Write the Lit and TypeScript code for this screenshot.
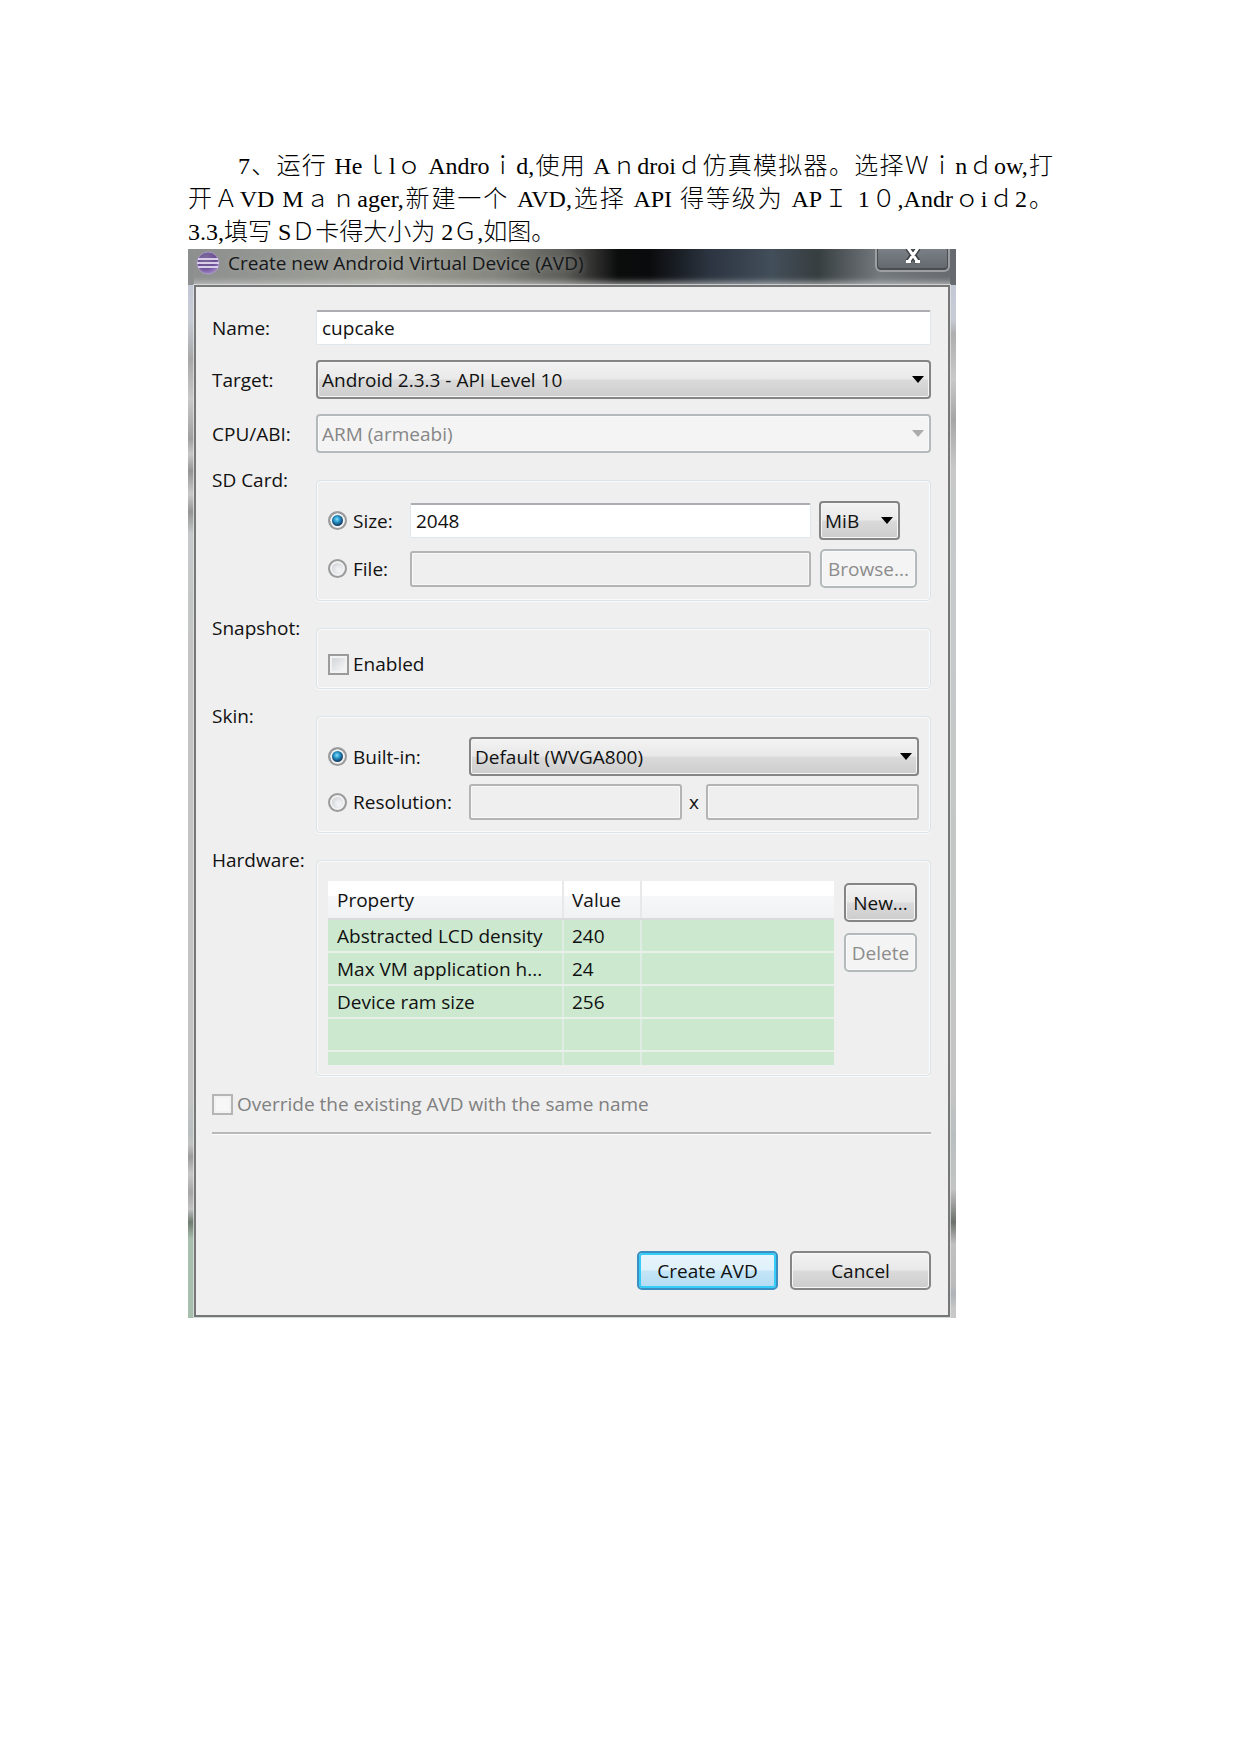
import { LitElement, html, css, svg, nothing } from "lit";
import { customElement, property } from "lit/decorators.js";

interface HardwareRow {
  name: string;
  value: string;
}

const HARDWARE: HardwareRow[] = [
  { name: "Abstracted LCD density", value: "240" },
  { name: "Max VM application h...", value: "24" },
  { name: "Device ram size", value: "256" },
  { name: "", value: "" },
  { name: "", value: "" },
];

/** Drop-down with the glossy face of the desktop theme. */
@customElement("combo-box")
export class ComboBox extends LitElement {
  @property() value = "";
  @property() label = "";
  @property({ type: Boolean }) disabled = false;

  static styles = css`
    :host {
      display: grid;
      min-width: 0;
    }
    .face,
    .arrow {
      grid-area: 1 / 1;
    }
    .face {
      appearance: none;
      box-sizing: border-box;
      width: 100%;
      height: 39px;
      margin: 0;
      padding: 0 24px 0 4px;
      border: 2px solid #858585;
      border-radius: 4px;
      background: linear-gradient(#f2f2f2, #e9e9e9 48%, #dadada 52%, #cdcdcd);
      box-shadow: inset 0 0 0 1px #f6f6f6;
      color: #111;
      font: inherit;
    }
    .face:disabled {
      border-color: #b4babc;
      background: #f4f4f4;
      box-shadow: inset 0 0 0 1px #fafafa;
      color: #868686;
      opacity: 1;
    }
    .arrow {
      align-self: center;
      justify-self: end;
      width: 12px;
      height: 7px;
      margin-right: 7px;
      fill: #000;
      pointer-events: none;
    }
    .face:disabled + .arrow {
      fill: #ababab;
    }
  `;

  render() {
    return html`
      <select class="face" aria-label=${this.label} ?disabled=${this.disabled}>
        <option>${this.value}</option>
      </select>
      <svg class="arrow" viewBox="0 0 12 7" aria-hidden="true"><path d="M0 0H12L6 7Z" /></svg>
    `;
  }
}

@customElement("app-root")
export class AppRoot extends LitElement {
  static styles = css`
    :host {
      display: block;
      background: #fff;
    }
    * {
      box-sizing: border-box;
    }
    .page {
      padding: 150px 188px 0;
      min-height: 100vh;
    }
    .intro {
      margin: 0;
      color: #000;
      font: 300 24px/33px "Liberation Serif", "Noto Sans CJK SC", serif;
    }
    .line {
      display: block;
      white-space: nowrap;
    }
    .full {
      text-align: justify;
      text-align-last: justify;
    }
    .first {
      padding-left: 50px;
    }

    .dialog {
      max-width: 768px;
      padding: 0 6px 1px;
      color: #111;
      font: 19px/24px "Open Sans", "Noto Sans", sans-serif;
      background:
        linear-gradient(90deg, #8d8f8f, #a1a399 26%, #85867f 40%, #5c5c58 49%, #0b0c0c 56%, #0a0b0c 60%, #2c3541 68%, #424e59 76%, #373e40 82%, #74797e 90%, #666a6e 100%)
          top / 100% 36px no-repeat,
        linear-gradient(#c3c8d6 36px, #c8ccd6 70px, #aeaeae 85px, #c9c9c9 130px, #a6a6a6 170px, #c8c8c8 220px, #c6caca 300px, #c4c4c4 850px, #b9bfbf 885px, #c4c4c4 940px, #6d706d 973px, #c0c0c0 995px, #bcbcbc 1035px, #b0b2b8 1045px, #c8c8c8 1060px)
          right top / 6px 100% no-repeat,
        linear-gradient(#c3c8d6 36px, #c8ccd6 70px, #a8a8a8 110px, #c9c9c9 150px, #a0a0a0 190px, #c8c8c8 205px, #959595 222px, #c9c9c9 245px, #959595 263px, #c6caca 285px, #c4c4c4 400px, #c4c4c4 850px, #b9bfbf 885px, #c4c4c4 895px, #9c9c9c 908px, #c7c7c7 925px, #a6a6a6 943px, #c2c2c2 960px, #6f7b70 973px, #a9bfae 990px);
    }
    .titlebar {
      display: flex;
      align-items: flex-start;
      justify-content: space-between;
      height: 36px;
      box-shadow: inset 0 -8px 6px -5px rgba(205, 205, 205, 0.75);
    }
    .caption {
      display: flex;
      align-items: center;
      gap: 8px;
      height: 28px;
      padding-left: 2px;
    }
    .orb {
      width: 24px;
      height: 24px;
    }
    .title {
      margin: 0;
      font: inherit;
      color: #15171a;
      text-shadow: 0 0 6px rgba(190, 190, 185, 0.5);
    }
    .close {
      display: flex;
      justify-content: center;
      width: 75px;
      height: 23px;
      padding: 0;
      border: 2px solid #9da0a3;
      border-top: 0;
      border-radius: 0 0 6px 6px;
      background: linear-gradient(#7b8086, #62676c);
      box-shadow: inset 0 -1px 0 1px #4a4e52;
    }
    .close svg {
      width: 18px;
      height: 16px;
    }

    .client {
      padding: 23px 17px 25px 16px;
      border: 2px solid #777;
      background: #efefef;
      box-shadow: 0 0 0 1px rgba(225, 230, 230, 0.7);
    }
    .form {
      display: grid;
      grid-template-columns: 104px minmax(0, 1fr);
      gap: 15px 0;
      align-items: center;
    }
    .group-label {
      align-self: start;
    }
    .group {
      margin-top: 12px;
      padding: 20px 13px 12px 11px;
      border: 1px solid #d9e3e8;
      border-radius: 4px;
      box-shadow: inset 0 0 0 1px #fafafa, 0 1px 0 #fafafa;
    }

    .text {
      width: 100%;
      min-width: 0;
      height: 35px;
      margin: 0;
      padding: 0 5px;
      border: 1px solid #e0e6ee;
      border-top: 2px solid #abadb3;
      border-radius: 2px;
      background: #fff;
      color: #111;
      font: inherit;
    }
    .text:disabled {
      height: 36px;
      border: 2px solid #b4b4b4;
      border-radius: 3px;
      background: #efefef;
      box-shadow: inset 0 0 0 1px #f8f8f8;
    }
    .button {
      height: 39px;
      margin: 0;
      padding: 0;
      border: 2px solid #858585;
      border-radius: 5px;
      background: linear-gradient(#f2f2f2, #e9e9e9 48%, #dadada 52%, #cdcdcd);
      box-shadow: inset 0 0 0 1px #f6f6f6;
      color: #111;
      font: inherit;
    }
    .button:disabled {
      border-color: #b4babc;
      background: #f4f4f4;
      box-shadow: inset 0 0 0 1px #fafafa;
      color: #8c8c8c;
    }
    .default {
      border-color: #3b8fc0;
      background: linear-gradient(#e8f5fc, #dff1fb 48%, #c3e5f8 52%, #b3dcf2);
      box-shadow: inset 0 0 0 2px #35cdf8;
    }

    .choice {
      display: flex;
      align-items: center;
      gap: 6px;
      white-space: nowrap;
    }
    .radio,
    .check {
      appearance: none;
      flex: none;
      margin: 0;
      border: 2px solid #9b9b9b;
    }
    .radio {
      width: 19px;
      height: 19px;
      border-radius: 50%;
      background: radial-gradient(circle at 60% 60%, #f0f1f3 15%, #c9ccd2 75%);
      box-shadow: inset 0 0 0 2px #f2f2f2;
    }
    .radio:checked {
      background: radial-gradient(circle at 46% 42%, #8fdcf8 0, #2c9fd2 22%, #164f7c 46%, #1b3f5c 58%, #e2e4e6 66%);
    }
    .check {
      width: 21px;
      height: 21px;
      background: linear-gradient(135deg, #cbcfd5, #f4f4f4 80%);
      box-shadow: inset 0 0 0 2px #f2f2f2;
    }
    .check:disabled {
      border-color: #b5b5b5;
      background: #f7f7f7;
    }
    .snug {
      gap: 4px;
    }

    .card {
      display: grid;
      grid-template-columns: 82px minmax(0, 1fr) 106px;
      row-gap: 9px;
      align-items: center;
    }
    .unit {
      width: 81px;
      margin-left: 8px;
    }
    .browse {
      margin-left: 9px;
    }
    .snapshot {
      padding-top: 23px;
    }
    .skin {
      display: grid;
      grid-template-columns: 141px minmax(0, 1fr);
      row-gap: 8px;
      align-items: center;
      padding-right: 11px;
    }
    .size {
      display: grid;
      grid-template-columns: minmax(0, 1fr) 24px minmax(0, 1fr);
      align-items: center;
      text-align: center;
    }
    .hardware {
      display: flex;
      align-items: flex-start;
      gap: 10px;
      padding-bottom: 10px;
    }
    .table {
      flex: 1;
      min-width: 0;
      border-collapse: collapse;
      table-layout: fixed;
      background: #cce8cf;
      text-align: left;
    }
    .table th,
    .table td {
      height: 33px;
      padding: 0 0 0 9px;
      border-right: 2px solid #dfece3;
      border-bottom: 2px solid #e9efe9;
      font-weight: 400;
      white-space: nowrap;
    }
    .table th:nth-child(2),
    .table td:nth-child(2) {
      padding-left: 8px;
    }
    .table th:last-child,
    .table td:last-child {
      border-right: 0;
    }
    .table tr:last-child td {
      height: 14px;
      border-bottom: 0;
    }
    .table thead tr th {
      height: 38px;
      border-right-color: #e6e8ea;
      border-bottom: 2px solid #d9dbdd;
      background: linear-gradient(#fff 40%, #f6f7f9 41%, #f1f2f4);
    }
    .property {
      width: 235px;
    }
    .value {
      width: 78px;
    }
    .side {
      display: flex;
      flex-direction: column;
      gap: 11px;
      width: 73px;
      padding-top: 2px;
    }

    .override {
      width: fit-content;
      margin-top: 16px;
      color: #808080;
    }
    .rule {
      height: 3px;
      margin: 16px 0 0;
      border: 0;
      border-top: 2px solid #b8b8b8;
      background: #fbfbfb;
    }
    .actions {
      display: flex;
      justify-content: flex-end;
      gap: 12px;
      margin-top: 116px;
    }
    .actions .button {
      width: 141px;
    }
  `;

  private renderOrb() {
    return html`<svg class="orb" viewBox="0 0 24 24" aria-hidden="true">
      <defs>
        <radialGradient id="orb" cx="0.4" cy="0.25" r="0.8">
          <stop offset="0" stop-color="#7d6a9c" />
          <stop offset="0.6" stop-color="#6a4f94" />
          <stop offset="1" stop-color="#a98bd0" />
        </radialGradient>
      </defs>
      <circle cx="12" cy="12" r="11" fill="url(#orb)" stroke="#a99bc0" stroke-width="1" />
      ${[8, 12, 16].map(
        (y) => svg`<rect x=${y === 12 ? 1 : 2} y=${y - 1} width=${y === 12 ? 22 : 20} height="2" fill="#d9cdea" />`,
      )}
    </svg>`;
  }

  private renderRow(row: HardwareRow) {
    return html`<tr>
      <td>${row.name || nothing}</td>
      <td>${row.value || nothing}</td>
      <td></td>
    </tr>`;
  }

  render() {
    return html`
      <main class="page">
        <p class="intro">
          <span class="line full first">7、运行 Heｌlｏ Androｉd,使用 Aｎdroiｄ仿真模拟器。选择Ｗｉnｄow,打</span>
          <span class="line full">开ＡVD Mａｎager,新建一个 AVD,选择 API 得等级为 APＩ 1０,Andrｏiｄ2。</span>
          <span class="line">3.3,填写 SＤ卡得大小为 2Ｇ,如图。</span>
        </p>

        <section class="dialog" role="dialog" aria-labelledby="title">
          <header class="titlebar">
            <div class="caption">
              ${this.renderOrb()}
              <h1 class="title" id="title">Create new Android Virtual Device (AVD)</h1>
            </div>
            <button class="close" aria-label="Close">
              <svg viewBox="0 0 18 16" aria-hidden="true">
                <path d="M4 -1L14 13M14 -1L4 13" fill="none" stroke="#3f4448" stroke-width="6" />
                <path d="M4 -1L13 12M14 -1L5 12M2 12.500H7M11 12.500H16" fill="none" stroke="#fff" stroke-width="3" />
              </svg>
            </button>
          </header>

          <div class="client">
            <div class="form">
              <label for="name">Name:</label>
              <input class="text" id="name" value="cupcake" />

              <span>Target:</span>
              <combo-box label="Target" value="Android 2.3.3 - API Level 10"></combo-box>

              <span>CPU/ABI:</span>
              <combo-box label="CPU/ABI" value="ARM (armeabi)" disabled></combo-box>

              <span class="group-label" id="sd">SD Card:</span>
              <div class="group card" role="group" aria-labelledby="sd">
                <label class="choice"><input class="radio" type="radio" name="sd" checked />Size:</label>
                <input class="text" aria-label="Size" value="2048" />
                <combo-box class="unit" label="Unit" value="MiB"></combo-box>
                <label class="choice"><input class="radio" type="radio" name="sd" />File:</label>
                <input class="text" aria-label="File" disabled />
                <button class="button browse" disabled>Browse...</button>
              </div>

              <span class="group-label" id="snapshot">Snapshot:</span>
              <div class="group snapshot" role="group" aria-labelledby="snapshot">
                <label class="choice snug"><input class="check" type="checkbox" />Enabled</label>
              </div>

              <span class="group-label" id="skin">Skin:</span>
              <div class="group skin" role="group" aria-labelledby="skin">
                <label class="choice"><input class="radio" type="radio" name="skin" checked />Built-in:</label>
                <combo-box label="Built-in skin" value="Default (WVGA800)"></combo-box>
                <label class="choice"><input class="radio" type="radio" name="skin" />Resolution:</label>
                <div class="size">
                  <input class="text" aria-label="Width" disabled />
                  <span>x</span>
                  <input class="text" aria-label="Height" disabled />
                </div>
              </div>

              <span class="group-label" id="hardware">Hardware:</span>
              <div class="group hardware" role="group" aria-labelledby="hardware">
                <table class="table">
                  <thead>
                    <tr>
                      <th class="property">Property</th>
                      <th class="value">Value</th>
                      <th></th>
                    </tr>
                  </thead>
                  <tbody>
                    ${HARDWARE.map((row) => this.renderRow(row))}
                  </tbody>
                </table>
                <div class="side">
                  <button class="button">New...</button>
                  <button class="button" disabled>Delete</button>
                </div>
              </div>
            </div>

            <label class="choice snug override"
              ><input class="check" type="checkbox" disabled />Override the existing AVD with the same name</label
            >
            <hr class="rule" />
            <div class="actions">
              <button class="button default">Create AVD</button>
              <button class="button">Cancel</button>
            </div>
          </div>
        </section>
      </main>
    `;
  }
}
